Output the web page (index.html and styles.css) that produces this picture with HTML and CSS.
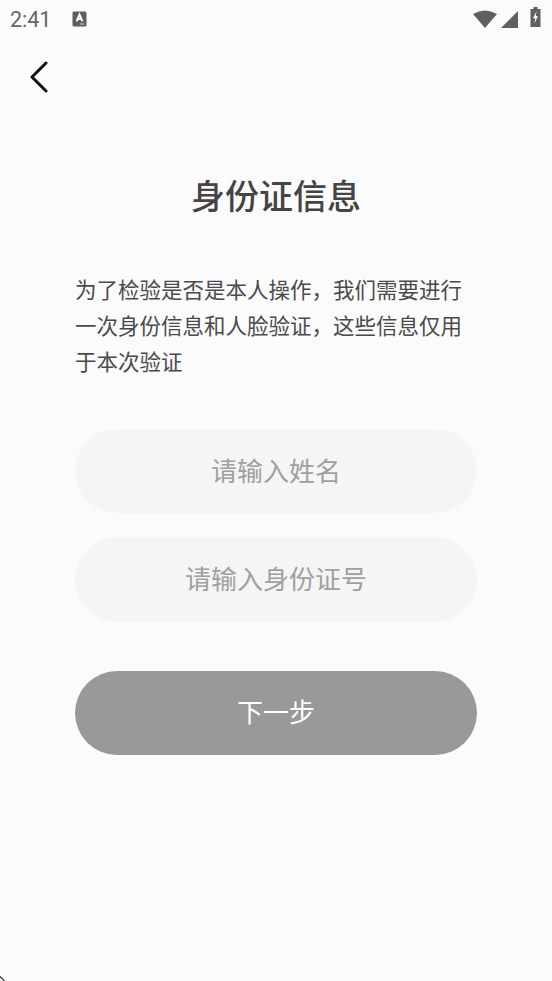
FILE: index.html
```html
<!DOCTYPE html>
<html lang="zh-CN">
<head>
  <meta charset="UTF-8" />
  <meta name="viewport" content="width=device-width, initial-scale=1.0"/>
  <title>身份证信息</title>
  <link rel="stylesheet" href="styles.css">
</head>
<body>
  <div class="statusbar">
    <div class="status-left">
      <span class="time">2:41</span>
      <svg class="app-icon" width="15" height="16" viewBox="0 0 15 16">
        <rect x="0.5" y="0.5" width="14" height="15" rx="1.5" fill="#5f5f5f"/>
        <path d="M4.6 10.4 L7.5 3.4 L10.4 10.4 M5.8 8 H9.2" fill="none" stroke="#fff" stroke-width="1.9"/>
        <path d="M8 13 H12.5" stroke="#ccc" stroke-width="1"/>
      </svg>
    </div>
    <div class="status-right">
      <svg class="wifi" width="24" height="18" viewBox="0 0 24 18"><path d="M0 4 Q12 -3 24 4 L12 18 Z" fill="#5f5f5f"/></svg>
      <svg class="signal" width="17" height="17" viewBox="0 0 17 17"><path d="M17 0 V17 H0 Z" fill="#5f5f5f"/></svg>
      <svg class="battery" width="11" height="20" viewBox="0 0 11 20">
        <path d="M3.5 0 H7.5 V2 H10.5 V20 H0.5 V2 H3.5 Z" fill="#5f5f5f"/>
        <path d="M6.6 4 L3 11.2 H5.2 L4.4 16.5 L8 9 H5.8 Z" fill="#fbfbfb"/>
      </svg>
    </div>
  </div>

  <div class="topbar">
    <a class="back" href="#">
      <svg width="20" height="32" viewBox="0 0 20 32"><path d="M17 2 L3 16 L17 30" fill="none" stroke="#111" stroke-width="3" stroke-linecap="round" stroke-linejoin="round"/></svg>
    </a>
  </div>

  <div class="container">
    <h1>身份证信息</h1>
    <p class="intro">为了检验是否是本人操作，我们需要进行一次身份信息和人脸验证，这些信息仅用于本次验证</p>
    <form class="form">
      <input class="field" type="text" placeholder="请输入姓名" />
      <input class="field" type="text" placeholder="请输入身份证号" />
      <button type="button" class="next-btn">下一步</button>
    </form>
  </div>

  <svg class="corner" width="5" height="5" viewBox="0 0 5 5"><path d="M0 0.5 L4.5 5" stroke="#333" stroke-width="1.2"/></svg>
</body>
</html>
```

FILE: styles.css
```css
* {
  margin: 0;
  padding: 0;
  box-sizing: border-box;
  font-family: "Roboto", "Noto Sans CJK SC", sans-serif;
}

body {
  background: #fbfbfb;
  color: #333;
  height: 981px;
  overflow: hidden;
  position: relative;
}

.statusbar {
  height: 38px;
  padding: 0 11px 0 10px;
  display: flex;
  align-items: center;
  justify-content: space-between;
}

.status-left {
  display: flex;
  align-items: center;
  gap: 21px;
}

.time {
  font-size: 21.5px;
  color: #666;
}

.app-icon {
  margin-bottom: 1px;
}

.status-right {
  display: flex;
  align-items: center;
  gap: 4px;
}

.battery {
  margin-left: 8px;
  margin-bottom: 4px;
}

.topbar {
  height: 76px;
  padding: 23px 0 0 29px;
}

.back {
  display: block;
  width: 20px;
}

.container {
  padding: 0 75px;
}

h1 {
  font-size: 34px;
  line-height: 44px;
  font-weight: 500;
  color: #444;
  text-align: center;
  margin-top: 61px;
}

.intro {
  margin-top: 54px;
  font-size: 21.5px;
  line-height: 36px;
  color: #4a4a4a;
  width: 392px;
}

.form {
  margin-top: 47.5px;
  display: flex;
  flex-direction: column;
  gap: 24px;
}

.field {
  height: 84.5px;
  padding-top: 2px;
  border: none;
  outline: none;
  border-radius: 43px;
  background: #f5f5f5;
  text-align: center;
  font-size: 26px;
  color: #333;
}

.field::placeholder {
  color: #a0a0a0;
  opacity: 1;
}

.next-btn {
  margin-top: 25px;
  height: 84.5px;
  padding-bottom: 5px;
  border: none;
  border-radius: 43px;
  background: #999;
  color: #fff;
  font-size: 26px;
}

.corner {
  position: absolute;
  left: 0;
  bottom: 0;
}
```
